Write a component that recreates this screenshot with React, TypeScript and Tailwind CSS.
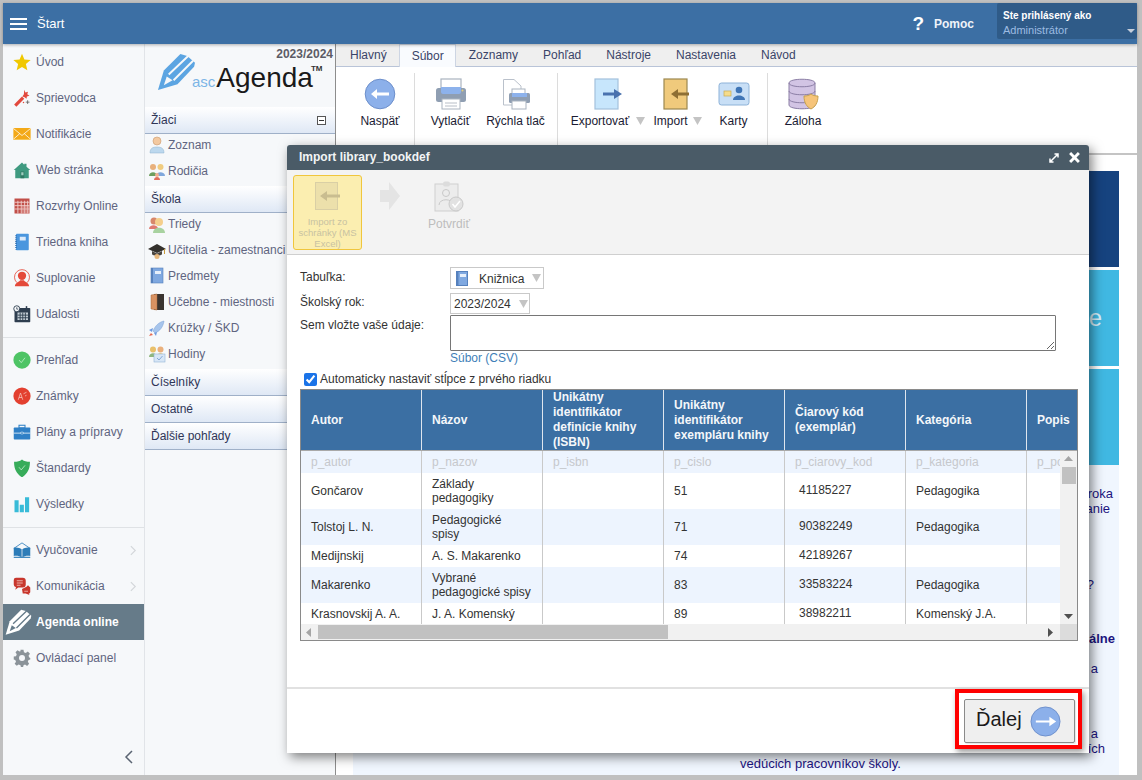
import React from "react";

const Pencil = ({ c, bg, className }: { c: string; bg: string; className?: string }) => (
  <svg viewBox="0 0 40 40" className={className}>
    <path d="M1 38 L7 18 L24 1 L31 3 L39 10 L38 14 L21 32 Z" fill={c} />
    <path d="M12 22 L32 3 M17 28 L37 8" stroke={bg} strokeWidth="2" fill="none" />
    <path d="M7 33 L10 24 L16 28 Z" fill={bg} />
  </svg>
);

const I = ({ children, s = 24 }: { children: React.ReactNode; s?: number }) => (
  <svg viewBox="0 0 24 24" width={s} height={s} className="shrink-0">
    {children}
  </svg>
);

const RailIcons: Record<string, React.ReactNode> = {
  star: <I><path d="M12 1 L15.200 8.800 L23.500 9.400 L17.200 14.800 L19.100 23 L12 18.600 L4.900 23 L6.800 14.800 L0.500 9.400 L8.800 8.800 Z" fill="#f0c800" /></I>,
  wand: <I><path d="M1.500 20.500 L12 10 L15 13 L4.500 23.500 Z" fill="#e2483d" /><path d="M15 1 L16.500 4.500 L20 3.500 L19 7 L22 9 L18.500 10 L18 13 L15.500 11 L12.500 10 L14.500 7 Z" fill="#e2483d" /><path d="M19.500 15 V20 M17 17.500 H22" stroke="#555" strokeWidth="1" /><circle cx="14" cy="18" r="1" fill="#e2483d" /></I>,
  mail: <I><rect x="0.500" y="4" width="23" height="16" fill="#f3a917" /><path d="M0.500 4.500 L12 14 L23.500 4.500 M0.500 19 L9 11.500 M23.500 19 L15 11.500" stroke="#fff" strokeWidth="1" fill="none" /><rect x="0.500" y="19" width="23" height="1" fill="#f6cf6e" /></I>,
  house: <I><path d="M12 2 L15 5 L15 3.500 L18 3.500 L18 7.500 L23 12 L21 12 L21 23 L3 23 L3 12 L1 12 Z" fill="#3f9a80" /><rect x="10" y="14" width="5" height="9" fill="#2f7a64" /><rect x="11" y="15" width="3" height="4" fill="#9fd0c0" /></I>,
  grid: <I><rect x="2" y="2" width="20" height="20" fill="#c14f48" /><path d="M2 7H22M2 11.500H22M2 16H22M6.500 5V22M11 5V22M15.500 5V22M19.500 5V22" stroke="#f0d0cd" strokeWidth="1.200" /><rect x="11.500" y="12" width="10" height="10" fill="#e3aaa5" opacity="0.500" /></I>,
  book: <I><rect x="4" y="1" width="17" height="22" rx="1" fill="#4a96de" /><rect x="9" y="5" width="8" height="5" fill="#dbeafa" /><path d="M4 3v19" stroke="#2a6cb0" strokeWidth="2" strokeDasharray="1.400 1.200" /></I>,
  sub: <I><path d="M5 18 A10 10 0 1 1 19 18" fill="none" stroke="#e4493a" strokeWidth="1.100" /><circle cx="12" cy="9" r="5.500" fill="#e4493a" /><path d="M2.500 23 C3 18 8 17.500 9.500 15 H14.500 C16 17.500 21 18 21.500 23 Z" fill="#e4493a" /></I>,
  event: <I><rect x="2" y="4" width="21" height="19" rx="1" fill="#2e3e4f" /><rect x="6" y="10" width="14" height="10" fill="#c4ced6" /><path d="M9.500 10V20M13 10V20M16.500 10V20M6 13.500H20M6 17H20" stroke="#2e3e4f" strokeWidth="1.200" /><circle cx="5" cy="5" r="4" fill="#f6f8fa" stroke="#2e3e4f" strokeWidth="1.200" /><path d="M5 3V5.500H7" stroke="#2e3e4f" fill="none" /><rect x="17" y="1.500" width="2" height="4" fill="#2e3e4f" /></I>,
  ok: <I><circle cx="12" cy="12" r="11.500" fill="#4ec465" /><path d="M8 12 L11 15.500 L16 9" stroke="#c9f2d2" strokeWidth="1" fill="none" /></I>,
  grade: <I><circle cx="12" cy="12" r="11.500" fill="#e3402f" /><path d="M7 17 L10 8 L13 17 M8 14H12 M14 9 L18 7 M16 12l2-1" stroke="#f6c7c0" strokeWidth="1" fill="none" /></I>,
  case: <I><rect x="1" y="6" width="22" height="16" rx="1" fill="#2f80c6" /><rect x="8" y="3" width="8" height="3.500" fill="none" stroke="#2f80c6" strokeWidth="1.400" /><path d="M1 13.500H23" stroke="#fff" strokeWidth="1" /><rect x="10" y="12.200" width="4" height="2.400" rx="1" fill="#2f80c6" stroke="#fff" strokeWidth="0.700" /></I>,
  shield: <I><path d="M12 0.500 C15 3 18 3.500 22.500 3.500 C23 13 19 20 12 24.500 C5 20 1 13 1.500 3.500 C6 3.500 9 3 12 0.500 Z" fill="#37ac5a" /><path d="M8 11 L11 14.500 L16 8.500" stroke="#d0f2da" strokeWidth="1" fill="none" /></I>,
  bars: <I><rect x="2" y="7" width="5.500" height="16" fill="#38bbd8" /><rect x="9" y="13" width="5.500" height="10" fill="#38bbd8" /><rect x="16" y="3" width="5.500" height="20" fill="#38bbd8" /></I>,
  teach: <I><path d="M1 10 L12 2.500 L23 10" fill="none" stroke="#2c7cb8" strokeWidth="1.100" /><path d="M1 9 C5 8 9 9 11.500 11 L11.500 22 C9 20 5 19.500 1 20 Z M23 9 C19 8 15 9 12.500 11 L12.500 22 C15 20 19 19.500 23 20 Z" fill="#2c7cb8" /><rect x="1" y="21" width="22" height="1.500" fill="#2c7cb8" /></I>,
  chat: <I><path d="M1 4 Q1 1 4 1 H13 Q17 1 17 5 V10 Q17 14 13 14 H7 L3 17 L4 13.500 Q1 13 1 10 Z" fill="#c8372d" /><path d="M5 5H13M5 8H13M5 11H10" stroke="#f4c9c4" strokeWidth="1.100" /><path d="M12 16 L18 13 L20 11 L23 14 V20 Q23 22 21 22 L22 24 L17 22 H13 Z" fill="#c8372d" /><path d="M15 19H20" stroke="#f4c9c4" /></I>,
  gear: <I><path d="M10 1H14L14.600 4.300 L17 5.300 L19.800 3.400 L22.600 6.200 L20.700 9 L21.700 11.400 L23 12 L23 14 L20.700 14.700 L19.800 17 L21.500 19.800 L18.800 22.500 L16 20.700 L14 21.500 L13.500 24 H10.500 L10 21.500 L7.500 20.500 L5 22.300 L2.200 19.500 L4 17 L3 14.600 L1 14 V10 L4 9.500 L5 7 L3.300 4.300 L6 1.600 L8.700 3.300 L10 3 Z" fill="#8b9399" /><circle cx="12" cy="12" r="4" fill="#f5f7fa" /></I>,
};

const railA = [["star", "Úvod"], ["wand", "Sprievodca"], ["mail", "Notifikácie"], ["house", "Web stránka"], ["grid", "Rozvrhy Online"], ["book", "Triedna kniha"], ["sub", "Suplovanie"], ["event", "Udalosti"]];
const railB = [["ok", "Prehľad"], ["grade", "Známky"], ["case", "Plány a prípravy"], ["shield", "Štandardy"], ["bars", "Výsledky"]];

const RailItem = ({ icon, label, more }: { icon: string; label: string; more?: boolean }) => (
  <div className="flex h-9 items-center pl-[7px]">
    <span className="flex w-[26px] justify-center pr-[2px]">
      <span className="scale-[0.75]">{RailIcons[icon]}</span>
    </span>
    <span className="text-[12px] text-[#5f6580]">{label}</span>
    {more && (
      <svg viewBox="0 0 8 12" width="7" height="11" className="ml-auto mr-[7px]">
        <path d="M1 1 L6 6 L1 11" fill="none" stroke="#d3d6da" strokeWidth="1.300" />
      </svg>
    )}
  </div>
);

const Section = ({ label, toggle }: { label: string; toggle?: boolean }) => (
  <div className="flex h-[27px] items-center justify-between border-b border-[#9fb0c8] bg-gradient-to-b from-white to-[#dfe8f5] pl-[6px] pr-[9px] text-[12px] text-[#2f3557]">
    <span>{label}</span>
    {toggle && (
      <span className="flex h-[9px] w-[9px] items-center justify-center border border-[#555] bg-white">
        <span className="h-px w-[5px] bg-[#333]" />
      </span>
    )}
  </div>
);

const Small = ({ children }: { children: React.ReactNode }) => (
  <svg viewBox="0 0 18 18" width="18" height="18" className="shrink-0">{children}</svg>
);

const SideItem = ({ icon, label }: { icon: React.ReactNode; label: string }) => (
  <div className="flex h-[26px] items-center gap-[2px] pb-1 pl-[3px] text-[12px] text-[#5f6580]">
    {icon}
    <span className="whitespace-nowrap">{label}</span>
  </div>
);

const Person = (
  <Small>
    <circle cx="9" cy="5" r="4" fill="#f3c9a0" stroke="#c99a70" strokeWidth="0.600" />
    <path d="M2 17 C2 12 5 11 9 11 C13 11 16 12 16 17 Z" fill="#bcd8ee" stroke="#8eb2cf" strokeWidth="0.500" />
  </Small>
);
const Parents = (
  <Small>
    <circle cx="5" cy="5" r="3" fill="#e8b07c" /><path d="M1 14 C1 9 9 9 9 14 Z" fill="#6d9e5f" />
    <circle cx="12.500" cy="5" r="3" fill="#f0cc80" /><path d="M8 14 C8 9 17 9 17 14 Z" fill="#7fa7dc" />
    <circle cx="9" cy="13" r="2" fill="#f0b090" /><path d="M6 18 C6 14 12 14 12 18 Z" fill="#e06e5c" />
  </Small>
);
const Class = (
  <Small>
    <circle cx="6" cy="6" r="3.500" fill="#d8876a" /><path d="M1 14 C1 9 10 9 10 14 Z" fill="#e07a70" />
    <circle cx="11" cy="7" r="4" fill="#f5cf8c" /><path d="M5 18 C5 11 17 11 17 18 Z" fill="#a8d2a0" />
  </Small>
);
const Grad = (
  <Small>
    <path d="M9 3 L18 8 L9 12 L0 8 Z" fill="#33302c" />
    <path d="M4 10 V13 C4 15 14 15 14 13 V10 L9 12.500 Z" fill="#4b4640" />
    <circle cx="9" cy="15.500" r="2.500" fill="#e8b87c" />
    <path d="M16.500 8 V13" stroke="#c99b3a" strokeWidth="1" />
  </Small>
);
const Subject = (
  <Small>
    <rect x="3" y="1" width="12" height="15" fill="#7fa8e0" stroke="#5681bd" strokeWidth="0.600" />
    <rect x="3" y="1" width="2" height="15" fill="#5681bd" />
    <rect x="7" y="4" width="6" height="3" fill="#e6effb" />
  </Small>
);
const Door = (
  <Small>
    <rect x="6" y="1" width="10" height="16" fill="#3a3430" />
    <path d="M3 2 L9 1 V17 L3 16 Z" fill="#d99262" stroke="#a66a3f" strokeWidth="0.500" />
  </Small>
);
const Rocket = (
  <Small>
    <path d="M16 2 C11 3 7 7 5 12 L7 14 C12 12 15 8 16 2 Z" fill="#a7c5ec" stroke="#7aa0d4" strokeWidth="0.500" />
    <path d="M5 9 L1 11 L4 13 Z M9 13 L8 17 L6 14 Z" fill="#6f9be0" />
    <path d="M3 14 L1 17 L5 16 Z" fill="#e66a50" />
  </Small>
);
const Hours = (
  <Small>
    <circle cx="5" cy="4.500" r="3" fill="#e9c06a" /><path d="M1 12 C1 7 9 7 9 12 Z" fill="#8fb67e" />
    <circle cx="12.500" cy="4.500" r="3" fill="#eab07c" /><path d="M8 12 C8 7 17 7 17 12 Z" fill="#e0c26a" />
    <rect x="6" y="9" width="11" height="8" fill="#d7e6f6" stroke="#93b4d8" strokeWidth="0.600" />
    <path d="M9 13 L11 15 L14.500 11" stroke="#7aa0d4" fill="none" strokeWidth="0.900" />
  </Small>
);

const Caret = () => (
  <svg viewBox="0 0 9 8" width="9" height="8" className="shrink-0"><path d="M0 0 H9 L4.500 8 Z" fill="#c4c4c4" /></svg>
);

const RB = ({ label, w, children, caret, gap }: { label: string; w: string; children: React.ReactNode; caret?: boolean; gap?: string }) => (
  <div className={`flex flex-col items-center ${w}`}>
    <div className="flex h-[32px] items-center justify-center">{children}</div>
    <div className={`mt-[4px] flex items-center whitespace-nowrap text-[12px] leading-[14px] text-[#1b1b33] ${gap ?? "gap-[7px]"}`}>
      <span>{label}</span>
      {caret && <Caret />}
    </div>
  </div>
);

const Sep = () => <div className="my-[6px] w-px self-stretch bg-[#dcdcdc]" />;

const columns = ["w-[121px]", "w-[121px]", "w-[121px]", "w-[121px]", "w-[121px]", "w-[121px]", "w-[60px]"];

const heads = ["Autor", "Názov", "Unikátny identifikátor definície knihy (ISBN)", "Unikátny identifikátor exempláru knihy", "Čiarový kód (exemplár)", "Kategória", "Popis"];
const keys = ["p_autor", "p_nazov", "p_isbn", "p_cislo", "p_ciarovy_kod", "p_kategoria", "p_popis"];
const rows: { h: string; alt?: boolean; c: string[] }[] = [
  { h: "h-[36px]", c: ["Gončarov", "Základy\npedagogiky", "", "51", "41185227", "Pedagogika", ""] },
  { h: "h-[36px]", alt: true, c: ["Tolstoj L. N.", "Pedagogické\nspisy", "", "71", "90382249", "Pedagogika", ""] },
  { h: "h-[22px]", c: ["Medijnskij", "A. S. Makarenko", "", "74", "42189267", "", ""] },
  { h: "h-[36px]", alt: true, c: ["Makarenko", "Vybrané\npedagogické spisy", "", "83", "33583224", "Pedagogika", ""] },
  { h: "h-[22px]", c: ["Krasnovskij A. A.", "J. A. Komenský", "", "89", "38982211", "Komenský J.A.", ""] },
];

const Tri = ({ d }: { d: "up" | "down" | "left" | "right" }) => {
  const p = { up: "M0 6 L4.500 1 L9 6 Z", down: "M0 2 H9 L4.500 7 Z", left: "M6 0 V9 L1 4.500 Z", right: "M2 0 V9 L7 4.500 Z" }[d];
  return <svg viewBox="0 0 9 9" width="9" height="9"><path d={p} fill={d === "left" || d === "up" ? "#a5a5a5" : "#505050"} /></svg>;
};

export default function App() {
  return (
    <div className="relative h-[780px] w-[1142px] overflow-hidden bg-[#c0c0c0] pb-[5px] pl-[3px] pr-[5px] pt-[3px] font-['Liberation_Sans',Arial,sans-serif]">
      <div className="flex h-full flex-col bg-white">
        {/* Top bar */}
        <header className="relative z-10 flex h-[41px] shrink-0 items-center bg-[#3c6fa4] shadow-[0_1px_3px_rgba(0,0,0,0.3)]">
          <div className="ml-[7px] flex h-[12px] w-[17px] flex-col justify-between">
            <span className="h-[2px] bg-white" /><span className="h-[2px] bg-white" /><span className="h-[2px] bg-white" />
          </div>
          <span className="ml-[10px] text-[13px] text-white">Štart</span>
          <span className="ml-auto text-[19px] font-bold leading-none text-white">?</span>
          <span className="ml-[10px] text-[12px] font-bold text-[#eef3f9]">Pomoc</span>
          <div className="relative ml-[23px] mt-[-5px] h-[36px] w-[140px] rounded-[2px] bg-[#2f5b88] pl-[6px] pt-[6px]">
            <div className="text-[10px] font-bold leading-[13px] text-white">Ste prihlásený ako</div>
            <div className="mt-[2px] text-[11px] leading-[13px] text-[#9dbce2]">Administrátor</div>
            <span className="absolute bottom-[6px] right-[2px] border-x-[4px] border-t-[4px] border-x-transparent border-t-[#c5cedb]" />
          </div>
        </header>

        <div className="flex min-h-0 flex-1">
          {/* Rail */}
          <nav className="flex w-[142px] shrink-0 flex-col border-r border-[#e1e4e8] bg-[#f6f8fa]">
            <div>
              {railA.map(([i, l]) => <RailItem key={l} icon={i} label={l} />)}
            </div>
            <div className="mb-[4px] mt-[5px] h-px bg-[#dfe2e5]" />
            {railB.map(([i, l]) => <RailItem key={l} icon={i} label={l} />)}
            <div className="mb-[4px] mt-[5px] h-px bg-[#dfe2e5]" />
            <RailItem icon="teach" label="Vyučovanie" more />
            <RailItem icon="chat" label="Komunikácia" more />
            <div className="flex h-[36px] items-center bg-[#667b89] pl-[2px]">
              <Pencil c="#fff" bg="#667b89" className="h-[27px] w-[27px]" />
              <span className="ml-[4px] text-[12px] font-bold text-white">Agenda online</span>
            </div>
            <RailItem icon="gear" label="Ovládací panel" />
            <div className="mt-auto flex justify-end pb-[11px] pr-[10px]">
              <svg viewBox="0 0 10 14" width="10" height="14"><path d="M8 1 L2 7 L8 13" fill="none" stroke="#5a6472" strokeWidth="1.500" /></svg>
            </div>
          </nav>

          {/* Secondary */}
          <aside className="flex w-[191px] shrink-0 flex-col border-r border-[#8d8d8d] bg-[#f6f8fa]">
            <div className="relative h-[63px] shrink-0">
              <div className="pr-[2px] pt-[3px] text-right text-[12px] font-bold leading-[14px] text-[#5c5c66]">2023/2024</div>
              <div className="absolute inset-0 flex items-start pl-[12px] pt-[9px]">
                <Pencil c="#5ca5e2" bg="#f6f8fa" className="h-[39px] w-[39px] shrink-0" />
                <span className="ml-[-4px] mt-[20px] text-[15px] leading-[18px] text-[#7cb5e6]">asc</span>
                <span className="ml-px mt-[9px] text-[28px] leading-[32px] text-[#1a1a1a]">Agenda</span>
                <span className="ml-[-2px] mt-[11px] text-[8px] font-bold leading-[10px] text-[#333]">TM</span>
              </div>
            </div>
            <Section label="Žiaci" toggle />
            <SideItem icon={Person} label="Zoznam" />
            <SideItem icon={Parents} label="Rodičia" />
            <Section label="Škola" />
            <SideItem icon={Class} label="Triedy" />
            <SideItem icon={Grad} label="Učitelia - zamestnanci" />
            <SideItem icon={Subject} label="Predmety" />
            <SideItem icon={Door} label="Učebne - miestnosti" />
            <SideItem icon={Rocket} label="Krúžky / ŠKD" />
            <SideItem icon={Hours} label="Hodiny" />
            <Section label="Číselníky" />
            <Section label="Ostatné" />
            <Section label="Ďalšie pohľady" />
          </aside>

          {/* Main */}
          <main className="flex min-w-0 flex-1 flex-col">
            <div className="flex h-[23px] shrink-0 items-end border-b border-[#b9c4d8] bg-[#efefef] pl-px text-[12px]">
              {["Hlavný", "Súbor", "Zoznamy", "Pohľad", "Nástroje", "Nastavenia", "Návod"].map((t) => (
                <div
                  key={t}
                  className={
                    t === "Súbor"
                      ? "relative top-px flex h-[23px] items-center border-x border-t border-[#cdd5e3] bg-[#f9fbfe] px-[11.500px] text-[#3a4468]"
                      : t === "Hlavný"
                        ? "flex h-[22px] items-center pl-[13px] pr-[12.500px] text-[#3a4468]"
                        : "flex h-[22px] items-center px-[12.500px] text-[#3a4468]"
                  }
                >
                  {t}
                </div>
              ))}
            </div>

            <div className="flex h-[88px] shrink-0 border-b-2 border-[#c4c4c4] bg-white">
              <div className="w-[78px] pl-[25px] pt-[11px]">
                <RB label="Naspäť" w="w-[38px]">
                  <svg viewBox="0 0 32 32" width="32" height="32" className="shrink-0">
                    <circle cx="16" cy="16" r="14.800" fill="#8cb0ea" stroke="#6d8fcb" />
                    <path d="M7 16 L13 11 V14.500 H25 V17.500 H13 V21 Z" fill="#fff" />
                  </svg>
                </RB>
              </div>
              <Sep />
              <div className="flex w-[142px] gap-[16px] pl-[16px] pt-[11px]">
                <RB label="Vytlačiť" w="w-[39px]">
                  <svg viewBox="0 0 32 32" width="32" height="32" className="shrink-0">
                    <rect x="6" y="1" width="20" height="12" fill="#fff" stroke="#aab3bf" strokeWidth="1.200" />
                    <rect x="1" y="10" width="30" height="14" rx="2.500" fill="#8f9eb2" />
                    <path d="M6 9 H26 V14 Q26 16 24 16 H8 Q6 16 6 14 Z" fill="#8db2ec" />
                    <rect x="7" y="21" width="18" height="10" fill="#fff" stroke="#aab3bf" />
                    <path d="M10 25H22M10 28H22" stroke="#b8bec7" />
                    <circle cx="27.500" cy="12.500" r="1" fill="#e2cd7a" />
                  </svg>
                </RB>
                <RB label="Rýchla tlač" w="w-[59px]">
                  <svg viewBox="0 0 32 32" width="32" height="32" className="shrink-0">
                    <path d="M3.500 1.500 H14 L21 8 V27 H3.500 Z" fill="#fff" stroke="#bac1cb" />
                    <rect x="12" y="11" width="13" height="6" fill="#fff" stroke="#aab3bf" />
                    <rect x="9" y="15" width="21" height="10" rx="1.500" fill="#8f9eb2" />
                    <rect x="12" y="15" width="15" height="4" fill="#8db2ec" />
                    <rect x="12" y="23" width="14" height="8" fill="#fff" stroke="#aab3bf" />
                  </svg>
                </RB>
              </div>
              <Sep />
              <div className="flex w-[209px] pl-[13px] pt-[11px]">
                <div className="w-[82px]">
                  <RB label="Exportovať" w="w-[74px]" caret>
                    <svg viewBox="0 0 32 32" width="32" height="32" className="shrink-0">
                      <rect x="3" y="1" width="23" height="30" fill="#c7e6fc" stroke="#a3c1dc" strokeWidth="1.200" />
                      <path d="M11 14.500 H22 V11 L30 16 L22 21 V17.500 H11 Z" fill="#4a72ae" />
                    </svg>
                  </RB>
                </div>
                <div className="w-[67px]">
                  <RB label="Import" w="w-[49px]" caret gap="gap-[5px]">
                    <svg viewBox="0 0 32 32" width="32" height="32" className="shrink-0">
                      <rect x="2" y="1" width="23" height="30" fill="#f0ca7c" stroke="#9c8850" strokeWidth="1.200" />
                      <path d="M27 14.500 H16 V11 L9 16 L16 21 V17.500 H27 Z" fill="#8e6f34" />
                    </svg>
                  </RB>
                </div>
                <RB label="Karty" w="w-[27px]">
                  <svg viewBox="0 0 32 32" width="32" height="32" className="shrink-0">
                    <rect x="1" y="5" width="30" height="22" rx="2.500" fill="#c8dff6" stroke="#8db2d8" />
                    <rect x="6" y="13" width="7" height="5" fill="#f5dc8c" stroke="#c9ab55" strokeWidth="0.700" />
                    <circle cx="21" cy="12" r="3.300" fill="#3f75b6" />
                    <path d="M15 22 C15 16 27 16 27 22 Z" fill="#3f75b6" />
                  </svg>
                </RB>
              </div>
              <Sep />
              <div className="pl-[17px] pt-[11px]">
                <RB label="Záloha" w="w-[36px]">
                  <svg viewBox="0 0 32 32" width="32" height="32" className="shrink-0">
                    <path d="M2 5 C2 0 28 0 28 5 V27 C28 32 2 32 2 27 Z" fill="#d2c4e4" stroke="#8b7ea5" />
                    <path d="M2 5 C2 10 28 10 28 5 M2 13 C2 18 28 18 28 13 M2 21 C2 26 28 26 28 21" fill="none" stroke="#8b7ea5" />
                    <path d="M24 16 C26 17.500 28 18 31 18 C31 25 28 29 24 31 C20 29 17 25 17 18 C20 18 22 17.500 24 16 Z" fill="#f6c47a" stroke="#c6a14d" />
                  </svg>
                </RB>
              </div>
            </div>

            {/* Page behind the dialog */}
            <div className="flex min-h-0 flex-1 flex-col gap-[3px] pl-[17px] pr-[18px] pt-[16px]">
              <div className="h-[96px] shrink-0 bg-[#16437f]" />
              <div className="flex h-[96px] shrink-0 items-center justify-end bg-[#40b8e2] pr-[17px] text-[24px] text-[#d8f0fa]">e</div>
              <div className="-mb-[3px] h-[96px] shrink-0 bg-[#40b8e2]" />
              <div className="min-h-0 flex-1 bg-[#f0f6fe] text-[13px] leading-[15px] text-[#1c1480]">
                <div className="mt-[21px] pr-[6px] text-right">roka</div>
                <div className="pr-[9px] text-right">anie</div>
                <div className="mt-[61px] pr-[25px] text-right">?</div>
                <div className="mt-[39px] pr-[4px] text-right font-bold">álne</div>
                <div className="mt-[15px] pr-[21px] text-right">a</div>
                <div className="mt-[50px] pr-[21px] text-right">a</div>
                <div className="pr-[14px] text-right">ích</div>
                <div className="pl-[387px]">vedúcich pracovníkov školy.</div>
              </div>
            </div>
          </main>
        </div>
      </div>

      {/* Dialog */}
      <div className="absolute left-[287px] top-[145px] flex h-[608px] w-[802px] flex-col rounded-t-[3px] bg-white shadow-[3px_4px_12px_rgba(0,0,0,0.5)]">
        <div className="flex h-[25px] shrink-0 items-center rounded-t-[3px] bg-[#4a5b67] pl-[12px] pr-[9px]">
          <span className="pb-[2px] text-[12px] font-bold text-[#f2f4f5]">Import library_bookdef</span>
          <svg viewBox="0 0 10 10" width="10" height="10" className="ml-auto">
            <path d="M1 9 L9 1 M5.500 1 H9 V4.500 M1 5.500 V9 H4.500" fill="none" stroke="#fff" strokeWidth="1.500" />
          </svg>
          <svg viewBox="0 0 10 10" width="11" height="11" className="ml-[10px]">
            <path d="M1 1 L9 9 M9 1 L1 9" fill="none" stroke="#fff" strokeWidth="2.600" />
          </svg>
        </div>

        <div className="flex h-[85px] shrink-0 items-start border-b border-[#cfcfcf] bg-[#f3f3f3] pl-[6px] pt-[5px]">
          <div className="flex h-[75px] w-[69px] flex-col items-center rounded-[3px] border border-[#f0c63c] bg-[#fbeeb0] pt-[6px]">
            <svg viewBox="0 0 26 30" width="26" height="30" className="shrink-0">
              <rect x="0.500" y="0.500" width="22" height="27" fill="#ece0ab" stroke="#d9cfa5" />
              <path d="M25 12.500 H12 V9 L5 14 L12 19 V15.500 H25 Z" fill="#c9bd90" />
            </svg>
            <div className="mt-[4px] text-center text-[9.500px] leading-[11px] text-[#c8c2a2]">Import zo schránky (MS Excel)</div>
          </div>
          <svg viewBox="0 0 20 28" width="20" height="28" className="ml-[18px] mt-[7px] shrink-0">
            <path d="M0 8 H9 V0 L20 14 L9 28 V20 H0 Z" fill="#e4e4e4" />
          </svg>
          <div className="ml-[27px] flex w-[44px] flex-col items-center pt-[6px]">
            <svg viewBox="0 0 30 31" width="30" height="31" className="shrink-0">
              <rect x="1" y="3" width="23" height="27" fill="#ececec" stroke="#cfcfcf" />
              <rect x="9" y="0.500" width="7" height="5" rx="2" fill="#dcdcdc" />
              <circle cx="12" cy="12" r="3.500" fill="none" stroke="#c9c9c9" />
              <path d="M5 24 C5 17 19 17 19 24" fill="none" stroke="#c9c9c9" />
              <circle cx="22" cy="23" r="7" fill="#e2e2e2" stroke="#c9c9c9" />
              <path d="M18.500 23 L21 26 L26 20" fill="none" stroke="#fff" strokeWidth="1.500" />
            </svg>
            <div className="mt-[5px] text-[12px] leading-[14px] text-[#bdbdbd]">Potvrdiť</div>
          </div>
        </div>

        <div className="min-h-0 flex-1 pl-[13px] pr-[10px] text-[12px] text-[#333]">
          <div className="mt-[12px] flex h-[23px] items-start">
            <span className="w-[150px] pt-[3px] leading-[14px]">Tabuľka:</span>
            <div className="flex h-[22px] w-[94px] items-center border border-[#c9c9c9] pl-[5px]">
              <svg viewBox="0 0 12 15" width="12" height="15" className="shrink-0">
                <rect x="0.500" y="0.500" width="11" height="14" fill="#7fa8e0" stroke="#5681bd" />
                <rect x="0.500" y="0.500" width="2" height="14" fill="#5681bd" />
                <rect x="4" y="3" width="6" height="3" fill="#e6effb" />
              </svg>
              <span className="ml-[11px] pt-[1px] text-[#333]">Knižnica</span>
              <span className="ml-[8px]"><Caret /></span>
            </div>
          </div>
          <div className="mt-[3px] flex h-[22px] items-start">
            <span className="w-[150px] pt-[2px] leading-[14px]">Školský rok:</span>
            <div className="flex h-[21px] w-[80px] items-center border border-[#c9c9c9] pl-[3px]">
              <span>2023/2024</span>
              <span className="ml-[8px]"><Caret /></span>
            </div>
          </div>
          <div className="flex">
            <span className="w-[150px] pt-[3px] leading-[14px]">Sem vložte vaše údaje:</span>
            <textarea readOnly className="h-[36px] w-[606px] rounded-[1px] border border-[#767676] bg-white align-top" />
          </div>
          <div className="ml-[150px] text-[12px] leading-[14px] text-[#3f7fb8]">Súbor (CSV)</div>
          <label className="ml-[4px] mt-[7px] flex items-center gap-[3px] leading-[14px]">
            <input type="checkbox" defaultChecked className="m-0 h-[13px] w-[13px] accent-[#1a73e8]" />
            <span>Automaticky nastaviť stĺpce z prvého riadku</span>
          </label>

          {/* Table */}
          <div className="mt-[3px] h-[252px] w-[778px] overflow-hidden border border-[#8a8a8a] text-[12px] text-[#333]">
            <div className="flex h-[61px] overflow-hidden border-b border-[#a9a9a9] bg-[#3b6fa3] font-bold leading-[15px] text-[#f4f7fa]">
              {heads.map((h, i) => (
                <div key={h} className={`${columns[i]} flex shrink-0 items-center border-r border-[#dfe6ee] pl-[10px] pr-[8px]`}>
                  {h}
                </div>
              ))}
            </div>
            <div className="flex h-[173px]">
              <div className="w-[759px] shrink-0 overflow-hidden">
                <div className="flex h-[22px] bg-[#edf4fe] text-[#c6c8cc]">
                  {keys.map((k, i) => (
                    <div key={k} className={`${columns[i]} flex shrink-0 items-center overflow-hidden whitespace-nowrap border-r border-[#c9c9c9] pl-[10px]`}>
                      {k}
                    </div>
                  ))}
                </div>
                {rows.map((r, ri) => (
                  <div key={ri} className={`flex ${r.h} leading-[14px] ${r.alt ? "bg-[#edf4fe]" : "bg-white"}`}>
                    {r.c.map((t, i) => (
                      <div
                        key={i}
                        className={`${columns[i]} flex shrink-0 items-center whitespace-pre-line border-r border-[#c9c9c9] ${i === 4 ? "pb-[2px] pl-[14px]" : "pl-[10px]"}`}
                      >
                        {t}
                      </div>
                    ))}
                  </div>
                ))}
              </div>
              <div className="flex w-[17px] shrink-0 flex-col items-center bg-[#f1f1f1]">
                <div className="flex h-[16px] items-center"><Tri d="up" /></div>
                <div className="h-[17px] w-[14px] bg-[#c1c1c1]" />
                <div className="mt-auto flex h-[16px] items-center"><Tri d="down" /></div>
              </div>
            </div>
            <div className="flex h-[16px] items-center bg-[#f1f1f1]">
              <div className="flex w-[17px] justify-center"><Tri d="left" /></div>
              <div className="h-[14px] w-[350px] bg-[#c1c1c1]" />
              <div className="ml-auto mr-[5px] flex justify-center"><Tri d="right" /></div>
              <div className="h-[16px] w-[17px] bg-[#dcdcdc]" />
            </div>
          </div>
        </div>

        <div className="flex h-[66px] shrink-0 justify-end border-t-2 border-[#e1e1e1] pr-[14px] pt-[10px]">
          <div className="flex h-[44px] w-[111px] items-center rounded-[2px] border border-[#8a8a8a] bg-[#efefef] pl-[11px] text-[20px] text-[#1a1a1a] shadow-[1px_1px_1px_rgba(0,0,0,0.1)]">
            <span className="pb-[4px]">Ďalej</span>
            <svg viewBox="0 0 32 32" width="31" height="31" className="ml-[8px] mt-[1px] shrink-0">
              <circle cx="16" cy="16" r="15" fill="#8cb0ea" stroke="#6d8fcb" />
              <path d="M6 15 H20 V11 L27 16 L20 21 V17 H6 Z" fill="#fff" />
            </svg>
          </div>
        </div>
      </div>

      {/* Annotation */}
      <div className="absolute left-[955px] top-[689px] h-[60px] w-[127px] border-[4px] border-[#ff0000] shadow-[2px_3px_6px_rgba(0,0,0,0.4)]" />
    </div>
  );
}
